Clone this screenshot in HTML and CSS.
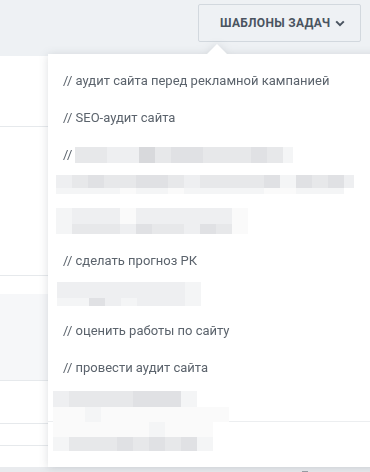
FILE: index.html
```html
<!DOCTYPE html>
<html lang="ru">
  <head>
    <meta charset="UTF-8" />
    <meta name="viewport" content="width=device-width, initial-scale=1.0" />
    <title>Шаблоны задач</title>
    <link rel="stylesheet" href="styles.css">
  </head>
  <body>
    <header class="topbar">
      <button class="tpl-btn" type="button">
        <span>Шаблоны задач</span>
        <svg class="chevron" width="10" height="7" viewBox="0 0 10 7" aria-hidden="true">
          <polyline points="1.2,1.4 5,5.2 8.8,1.4" fill="none" stroke="currentColor" stroke-width="2" />
        </svg>
      </button>
    </header>

    <!-- the board that sits behind the dropdown -->
    <div class="board">
      <div class="row row-a"></div>
      <div class="row row-b"></div>
      <div class="row row-c"></div>
      <div class="row row-d"></div>
      <div class="row row-e"></div>
      <div class="row row-f"></div>
      <div class="row row-g"></div>
      <div class="row-foot"><span class="dash"></span></div>
    </div>

    <div class="menu">
      <div class="item">// аудит сайта перед рекламной кампанией</div>
      <div class="item">// SEO-аудит сайта</div>
      <div class="item">
        <span>//</span>
        <span class="mosaic">
          <span class="strip tall">
            <i class="s2"></i><i class="s2"></i><i class="s1"></i><i class="s1"></i><i class="s4"></i><i class="s2"></i><i class="s3"></i><i class="s3"></i><i class="s2"></i><i class="s2"></i><i class="s2"></i><i class="s3"></i><i class="s2"></i><i class="s0 part"></i>
          </span>
        </span>
      </div>

      <div class="blur blur-a">
        <div class="strip h13">
          <i class="s1"></i><i class="s2"></i><i class="s3"></i><i class="s2"></i><i class="s2"></i><i class="s3"></i><i class="s3"></i><i class="s2"></i><i class="s1"></i><i class="s2"></i><i class="s2"></i><i class="s2"></i><i class="s2"></i><i class="s3"></i><i class="s0"></i><i class="s3"></i><i class="s2"></i><i class="s3"></i><i class="s1 part"></i>
        </div>
        <div class="strip h6">
          <i class="s0"></i><i class="s0"></i><i class="s0"></i><i class="s0"></i><i class="s00"></i><i class="s0"></i><i class="s0"></i><i class="s00"></i><i class="s0"></i><i class="s0"></i><i class="s0"></i><i class="s0"></i><i class="s0"></i><i class="s00"></i><i class="s00"></i><i class="s0"></i><i class="s0"></i><i class="s0"></i>
        </div>
      </div>

      <div class="blur blur-b">
        <div class="strip tall">
          <i class="s0"></i><i class="s1"></i><i class="s1"></i><i class="s1"></i><i class="s00"></i><i class="s1"></i><i class="s1"></i><i class="s1"></i><i class="s1"></i><i class="s1"></i><i class="s1"></i><i class="s00"></i>
        </div>
        <div class="strip h10">
          <i class="s0"></i><i class="s2"></i><i class="s2"></i><i class="s2"></i><i class="s1"></i><i class="s3"></i><i class="s2"></i><i class="s2"></i><i class="s1"></i><i class="s3"></i><i class="s2"></i><i class="s00"></i>
        </div>
      </div>

      <div class="item item-mid">// сделать прогноз РК</div>

      <div class="blur blur-c">
        <div class="strip tall">
          <i class="s1"></i><i class="s1"></i><i class="s1"></i><i class="s1"></i><i class="s1"></i><i class="s1"></i><i class="s1"></i><i class="s1"></i><i class="s0"></i>
        </div>
        <div class="strip h8">
          <i class="s0"></i><i class="s0"></i><i class="s3"></i><i class="s1"></i><i class="s0"></i><i class="s1"></i><i class="s1"></i><i class="s1"></i><i class="s0"></i>
        </div>
      </div>

      <div class="item item-mid">// оценить работы по сайту</div>
      <div class="item">// провести аудит сайта</div>

      <div class="blur blur-d">
        <div class="strip tall">
          <i class="s1"></i><i class="s2"></i><i class="s2"></i><i class="s2"></i><i class="s2"></i><i class="s3"></i><i class="s3"></i><i class="s3"></i><i class="s0"></i>
        </div>
        <div class="strip h15">
          <i class="s00"></i><i class="s00"></i><i class="s0"></i><i class="s00"></i><i class="s00"></i><i class="s00"></i><i class="s00"></i><i class="s00"></i><i class="s00"></i><i class="s00"></i><i class="s00"></i>
        </div>
      </div>
      <div class="divider"></div>
      <div class="blur blur-e">
        <div class="strip h15">
          <i class="s00"></i><i class="s00"></i><i class="s00"></i><i class="s00"></i><i class="s00"></i><i class="s00"></i><i class="s0"></i><i class="s00"></i><i class="s00"></i><i class="s00"></i>
        </div>
        <div class="strip h14">
          <i class="s0"></i><i class="s2"></i><i class="s2"></i><i class="s2"></i><i class="s3"></i><i class="s2"></i><i class="s3"></i><i class="s2"></i><i class="s3"></i><i class="s0"></i>
        </div>
      </div>
    </div>
  </body>
</html>
```

FILE: styles.css
```css
* {
  box-sizing: border-box;
}
body {
  margin: 0;
  position: relative;
  height: 472px;
  overflow: hidden;
  background: #fff;
  font-family: Roboto, "Noto Sans", sans-serif;
  color: #5b636c;
}

/* header */
.topbar {
  height: 56px;
  background: #eef1f4;
  display: flex;
  justify-content: flex-end;
  padding: 4px 9px 0 0;
}
.tpl-btn {
  display: flex;
  align-items: center;
  gap: 5px;
  width: 163px;
  height: 38px;
  padding: 0 12px 0 21px;
  background: #eef1f4;
  border: 1px solid #d2d8de;
  border-radius: 2px;
  font-family: Roboto, "Noto Sans", sans-serif;
  font-size: 12px;
  font-weight: 700;
  letter-spacing: 0.3px;
  text-transform: uppercase;
  color: #4a5460;
  white-space: nowrap;
}
.chevron {
  margin-top: 1px;
  flex: none;
}

/* background board */
.board .row {
  border-bottom: 1px solid #e6e9ec;
}
.row-a { height: 71px; }
.row-b { height: 149px; }
.row-c { height: 18px; border-bottom: 0 !important; }
.row-d { height: 87px; background: #f6f7f9; }
.row-e { height: 43px; }
.row-f { height: 22px; }
.row-g { height: 21px; border-bottom: 0 !important; }
.row-foot {
  height: 10px;
  background: #e9ebee;
  position: relative;
}
.dash {
  position: absolute;
  left: 302px;
  top: 4px;
  width: 6px;
  height: 1px;
  background: #9aa0a6;
}

/* dropdown */
.menu {
  position: absolute;
  left: 48px;
  top: 54px;
  width: 330px;
  height: 413px;
  background: #fff;
  padding-top: 8px;
  filter: drop-shadow(0 1px 5px rgba(40, 50, 60, 0.16));
}
.menu::before {
  content: "";
  position: absolute;
  top: -10px;
  left: 159px;
  border-left: 10px solid transparent;
  border-right: 10px solid transparent;
  border-bottom: 10px solid #fff;
}
.item {
  display: flex;
  align-items: center;
  gap: 3px;
  height: 37px;
  padding: 0 15px;
  font-size: 13px;
  line-height: 17px;
  color: #5b636c;
  white-space: nowrap;
}
.item-mid {
  height: 38px;
}
.mosaic {
  display: flex;
  align-items: center;
  height: 16px;
}

/* blurred (hidden) entries */
.strip {
  display: flex;
}
.strip i {
  display: block;
  width: 16px;
  height: 100%;
}
.strip i.part { width: 10px; }
.tall { height: 16px; }
.h13 { height: 13px; }
.h6 { height: 6px; }
.h8 { height: 8px; }
.h10 { height: 10px; }
.h14 { height: 14px; }
.h15 { height: 15px; }

.s00 { background: #fafafa; }
.s0 { background: #f4f5f6; }
.s1 { background: #eeeff1; }
.s2 { background: #e7e8ea; }
.s3 { background: #e0e1e4; }
.s4 { background: #d8d9dc; }

.blur { padding-left: 8px; }
.blur-a { margin-top: 2px; height: 33px; }
.blur-b { height: 33px; }
.blur-c { margin-top: 3px; height: 29px; padding-left: 9px; }
.blur-d { margin-top: 5px; padding-left: 5px; height: 31px; }
.divider {
  height: 1px;
  background: #eceef0;
  margin-top: -1px;
}
.blur-e { padding-left: 5px; }
```
